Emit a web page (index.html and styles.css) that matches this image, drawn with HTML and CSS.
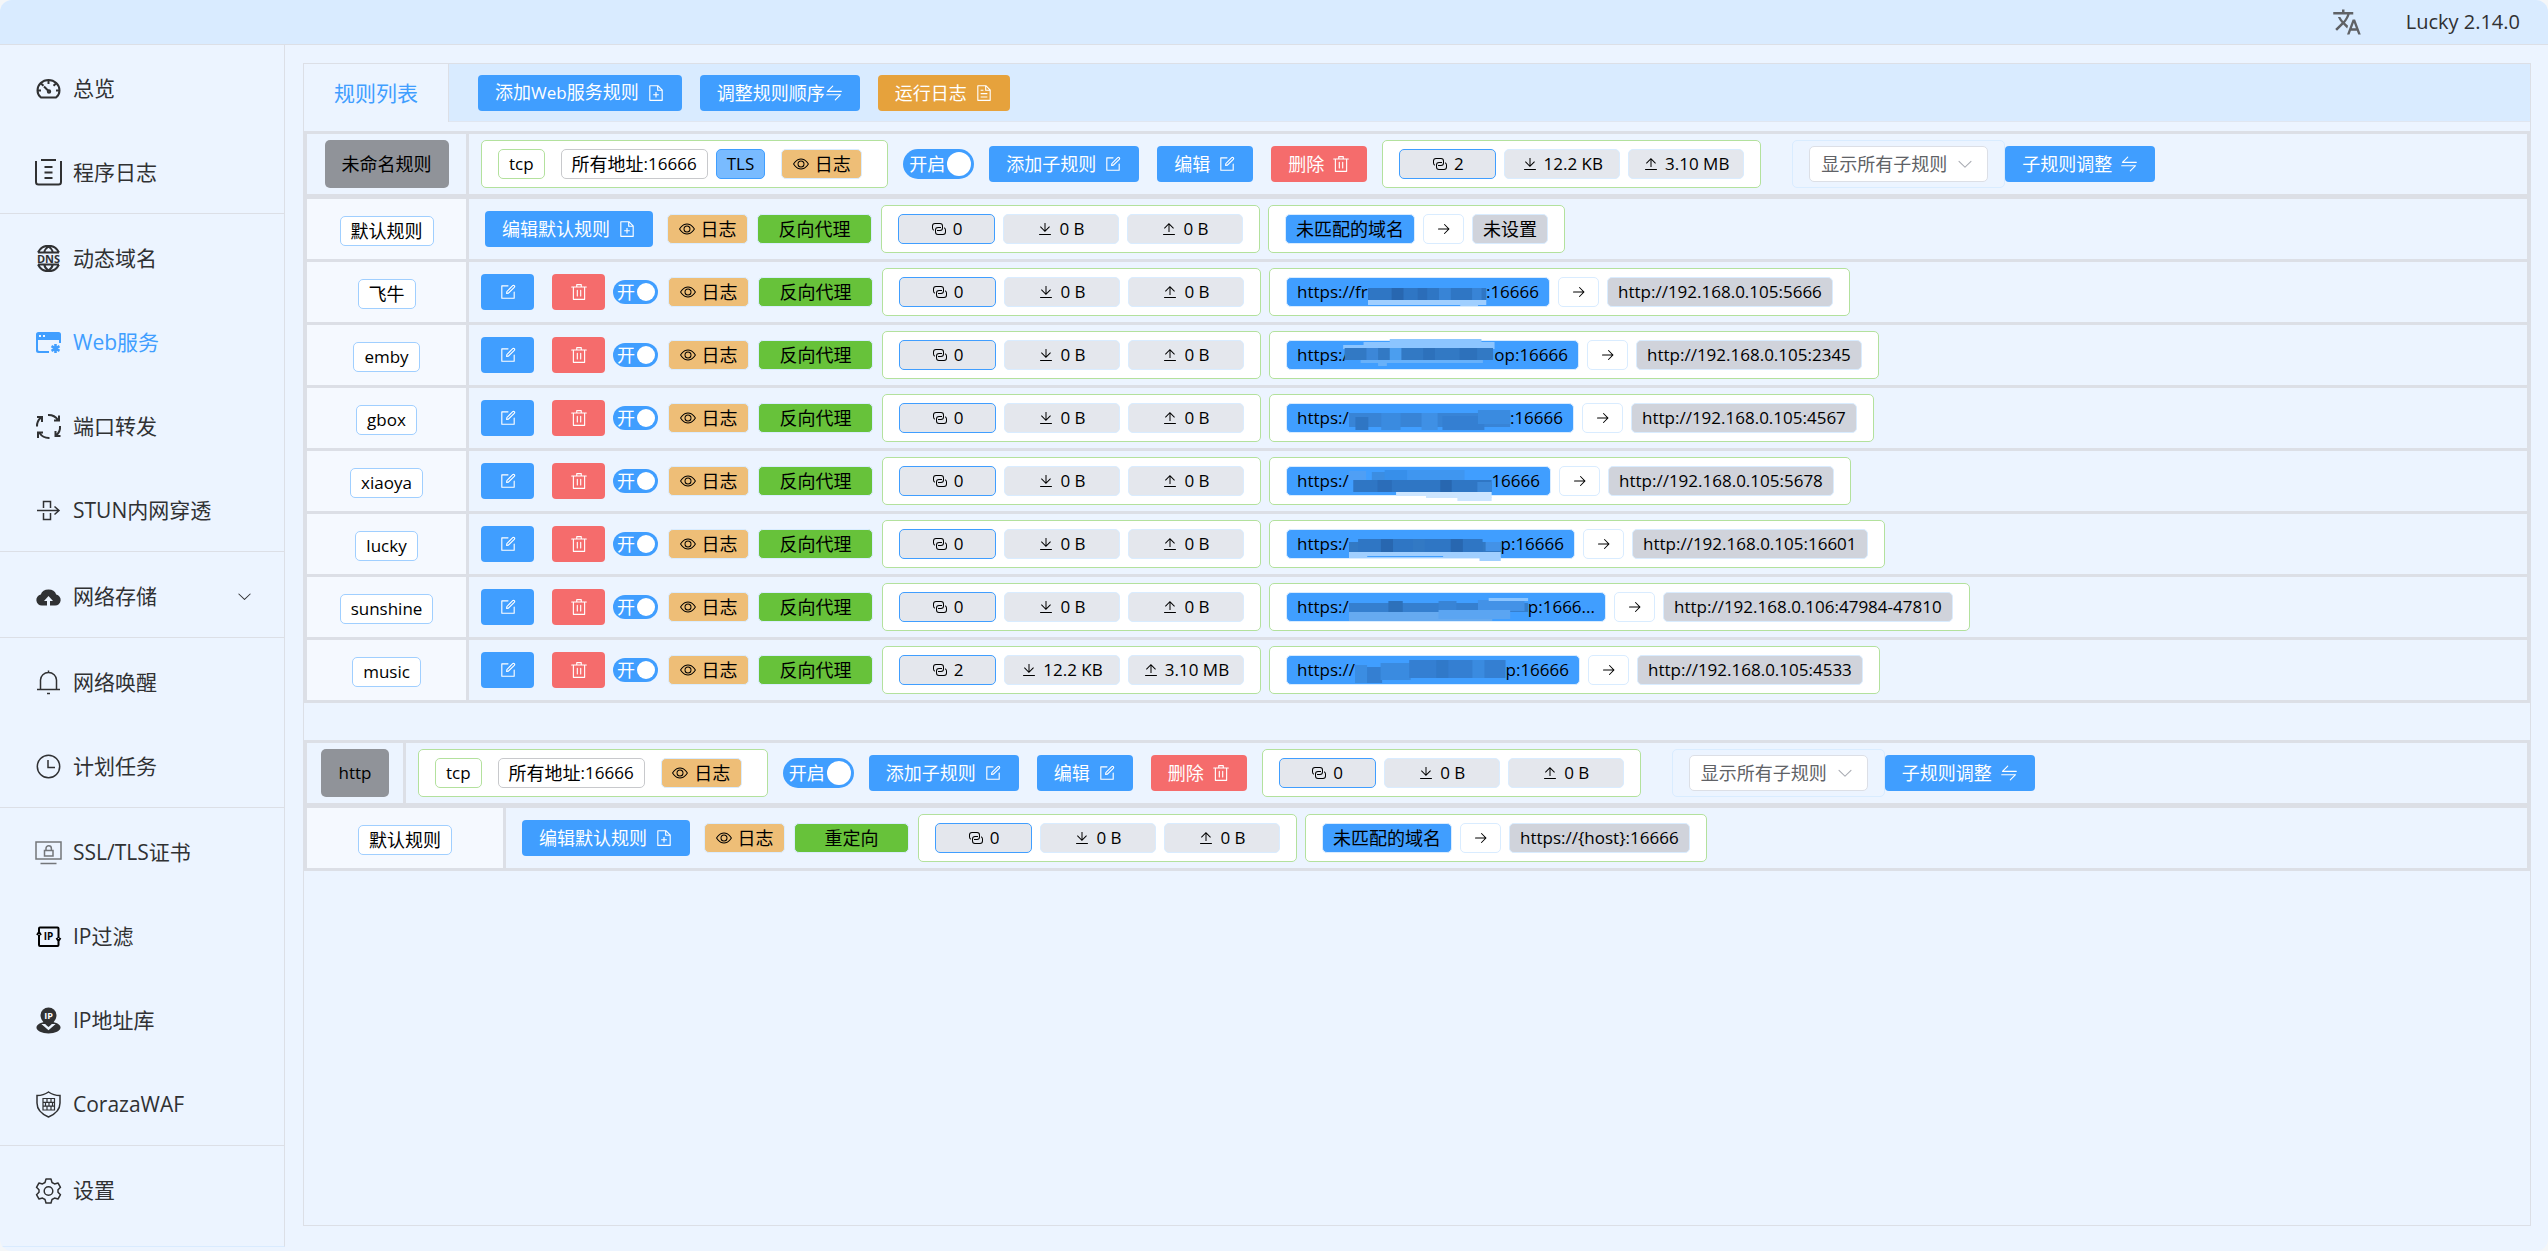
FILE: index.html
```html
<!DOCTYPE html>
<html lang="zh-CN">
<head>
    <meta charset="UTF-8">
    <title>Lucky</title>
    <link rel="stylesheet" href="styles.css">
</head>
<body>
    <svg class="sprite" aria-hidden="true">
        <symbol id="doc-add" viewBox="0 0 1024 1024"><path d="M832 384H576V128H192v768h640zm-26.496-64L640 154.496V320zM160 64h480l256 256v608a32 32 0 0 1-32 32H160a32 32 0 0 1-32-32V96a32 32 0 0 1 32-32m320 512V448h64v128h128v64H544v128h-64V640H352v-64z"/></symbol>
        <symbol id="doc" viewBox="0 0 1024 1024"><path d="M832 384H576V128H192v768h640zm-26.496-64L640 154.496V320zM160 64h480l256 256v608a32 32 0 0 1-32 32H160a32 32 0 0 1-32-32V96a32 32 0 0 1 32-32m160 448h384v64H320zm0-192h160v64H320zm0 384h384v64H320z"/></symbol>
        <symbol id="swap" viewBox="0 0 1024 1024"><path d="M118.656 438.656a32 32 0 0 1 0-45.248L416 96l4.48-3.776A32 32 0 0 1 461.248 96l3.712 4.48a32.064 32.064 0 0 1-3.712 40.832L218.56 384H928a32 32 0 1 1 0 64H141.248a32 32 0 0 1-22.592-9.344M64 608a32 32 0 0 1 32-32h786.752a32 32 0 0 1 22.656 54.592L608 928l-4.48 3.776a32.064 32.064 0 0 1-40.832-49.024L805.632 640H96a32 32 0 0 1-32-32"/></symbol>
        <symbol id="edit" viewBox="0 0 1024 1024"><path d="M832 512a32 32 0 1 1 64 0v352a32 32 0 0 1-32 32H160a32 32 0 0 1-32-32V160a32 32 0 0 1 32-32h352a32 32 0 0 1 0 64H192v640h640z"/><path d="m469.952 554.24 52.8-7.552L847.104 222.4a32 32 0 1 0-45.248-45.248L477.44 501.44l-7.552 52.8zm422.4-422.4a96 96 0 0 1 0 135.808l-331.84 331.84a32 32 0 0 1-18.112 9.088L436.8 623.68a32 32 0 0 1-36.224-36.224l15.104-105.6a32 32 0 0 1 9.024-18.112l331.904-331.84a96 96 0 0 1 135.744 0z"/></symbol>
        <symbol id="trash" viewBox="0 0 1024 1024"><path d="M160 256H96a32 32 0 0 1 0-64h256V95.936a32 32 0 0 1 32-32h256a32 32 0 0 1 32 32V192h256a32 32 0 1 1 0 64h-64v672a32 32 0 0 1-32 32H192a32 32 0 0 1-32-32zm448-64v-64H416v64zM224 896h576V256H224zm192-128a32 32 0 0 1-32-32V416a32 32 0 0 1 64 0v320a32 32 0 0 1-32 32m192 0a32 32 0 0 1-32-32V416a32 32 0 0 1 64 0v320a32 32 0 0 1-32 32"/></symbol>
        <symbol id="eye" viewBox="0 0 1024 1024"><path d="M512 160c320 0 512 352 512 352S832 864 512 864 0 512 0 512s192-352 512-352m0 64c-225.28 0-384.128 208.064-436.8 288 52.608 79.872 211.456 288 436.8 288 225.28 0 384.128-208.064 436.8-288-52.608-79.872-211.456-288-436.8-288m0 64a224 224 0 1 1 0 448 224 224 0 0 1 0-448m0 64a160.192 160.192 0 0 0-160 160c0 88.192 71.744 160 160 160s160-71.808 160-160-71.744-160-160-160"/></symbol>
        <symbol id="link" viewBox="0 0 1024 1024"><path d="M640 384v64H448a128 128 0 0 0-128 128v128a128 128 0 0 0 128 128h320a128 128 0 0 0 128-128V576a128 128 0 0 0-64-110.848V394.88c74.56 26.368 128 97.472 128 181.056v128a192 192 0 0 1-192 192H448a192 192 0 0 1-192-192V576a192 192 0 0 1 192-192z"/><path d="M384 640v-64h192a128 128 0 0 0 128-128V320a128 128 0 0 0-128-128H256a128 128 0 0 0-128 128v128a128 128 0 0 0 64 110.848v70.272A192.064 192.064 0 0 1 64 448V320a192 192 0 0 1 192-192h320a192 192 0 0 1 192 192v128a192 192 0 0 1-192 192z"/></symbol>
        <symbol id="down" viewBox="0 0 1024 1024"><path d="M160 832h704a32 32 0 1 1 0 64H160a32 32 0 1 1 0-64m384-253.696 236.288-236.352 45.248 45.248L508.8 704 192 387.2l45.248-45.248L480 584.704V128h64z"/></symbol>
        <symbol id="up" viewBox="0 0 1024 1024"><path d="M160 832h704a32 32 0 1 1 0 64H160a32 32 0 1 1 0-64m384-578.304V704h-64V247.296L237.248 490.048 192 444.8 508.8 128l316.8 316.8-45.312 45.248z"/></symbol>
        <symbol id="right" viewBox="0 0 1024 1024"><path d="M754.752 480H160a32 32 0 1 0 0 64h594.752L521.344 777.344a32 32 0 0 0 45.312 45.312l288-288a32 32 0 0 0 0-45.312l-288-288a32 32 0 1 0-45.312 45.312z"/></symbol>
        <symbol id="chevron" viewBox="0 0 1024 1024"><path d="M831.872 340.864 512 652.672 192.128 340.864a30.592 30.592 0 0 0-42.752 0 29.12 29.12 0 0 0 0 41.6L489.664 714.24a32 32 0 0 0 44.672 0l340.288-331.712a29.12 29.12 0 0 0 0-41.728 30.592 30.592 0 0 0-42.752 0z"/></symbol>
    </svg>

    <div class="app">
        <header class="topbar">
            <button class="lang" aria-label="语言"><svg viewBox="0 0 24 24"><path d="M12.87 15.07l-2.54-2.51.03-.03c1.74-1.94 2.98-4.17 3.71-6.53H17V4h-7V2H8v2H1v1.99h11.17C11.5 7.92 10.44 9.75 9 11.35 8.07 10.32 7.3 9.19 6.69 8h-2c.73 1.63 1.73 3.17 2.98 4.56l-5.09 5.02L4 19l5-5 3.11 3.11.76-2.04zM18.5 10h-2L12 22h2l1.12-3h4.75L21 22h2l-4.5-12zm-2.62 7l1.62-4.33L19.12 17h-3.24z"/></svg></button>
            <span class="version">Lucky 2.14.0</span>
        </header>

        <div class="body">
            <nav class="sidebar">
                <div class="menu-group">
                    <a href="#" class="menu-item">
                        <svg class="line" viewBox="0 0 27 27"><path d="M6 22.500C3.500 20.500 2.500 18 2.500 15.500a11 10.500 0 0 1 22 0c0 2.500-1 5-3.500 7z"/><path d="M13.500 5v4M6 8.500l2.500 2.300M21 8.500l-2.500 2.300M3 15.500h3M21 15.500h3M9 11.500l4.500 4.500"/><circle cx="14" cy="16.500" r="1.200"/></svg>
                        总览
                    </a>
                    <a href="#" class="menu-item">
                        <svg class="line" viewBox="0 0 27 27"><path d="M1 2v21q0 2.500 2.500 2.500h20q2.500 0 2.500-2.500V2M6 1h15M9.500 8h8M9.500 13.500h8M9.500 19h8"/></svg>
                        程序日志
                    </a>
                </div>
                <div class="menu-group">
                    <a href="#" class="menu-item">
                        <svg class="line" viewBox="0 0 27 27"><path d="M3 7.500C7.500-1.500 19.500-1.500 24 7.500M3 19.500C7.500 28.500 19.500 28.500 24 19.500M9 8q1-4.500 4.500-6.500Q17 3.500 18 8M9 19q1 4.500 4.500 6.500Q17 23.500 18 19M3 7.500h21M3 19.500h21"/><text x="13.500" y="17.500" class="dns">DNS</text></svg>
                        动态域名
                    </a>
                    <a href="#" class="menu-item active">
                        <svg viewBox="0 0 27 27"><path fill-rule="evenodd" d="M3.500 3h20A2.500 2.500 0 0 1 26 5.500V14h-2v-3H3v9.500q0 1.500 1.500 1.500H14v2H3.500A2.500 2.500 0 0 1 1 21.500v-16A2.500 2.500 0 0 1 3.500 3zM4 6v2h2V6zm4 0v2h2V6z"/><path d="M20.500 15v9M16.500 17.200l8 4.600M24.500 17.200l-8 4.600" stroke="currentColor" stroke-width="2.600"/></svg>
                        Web服务
                    </a>
                    <a href="#" class="menu-item">
                        <svg class="line" viewBox="0 0 27 27"><path d="M2 13.500A11 11 0 0 1 6 4.500M2 4h5v5M13 2a11.500 11.500 0 0 1 10 5M24 2.500v5h-5M25 13a11 11 0 0 1-4 9.500M25.500 23h-5v-5M14.500 25a11.500 11.500 0 0 1-10-5M3 25v-5.500h5"/></svg>
                        端口转发
                    </a>
                    <a href="#" class="menu-item">
                        <svg class="line thin" viewBox="0 0 27 27"><path d="M2 13.500h22M19.500 9.500l4.500 4-4.500 4M8.500 11V4.500h7V11M8.500 16v6.500h7V16"/></svg>
                        STUN内网穿透
                    </a>
                </div>
                <div class="menu-group">
                    <a href="#" class="menu-item">
                        <svg viewBox="0 0 27 27"><path fill-rule="evenodd" d="M7 22.500a5.500 5.500 0 0 1-1.200-10.900 8 7 0 0 1 15.400 0A5.500 5.500 0 0 1 20 22.500h-5V18h3l-4.500-5L9 18h3v4.500z"/></svg>
                        网络存储
                        <svg class="chev"><use href="#chevron"/></svg>
                    </a>
                </div>
                <div class="menu-group">
                    <a href="#" class="menu-item">
                        <svg class="line thin" viewBox="0 0 27 27"><path d="M2 20.500h23M5.500 20.500V11a8 7.500 0 0 1 16 0v9.500M13.500 1.500v2M12 24.500h3"/></svg>
                        网络唤醒
                    </a>
                    <a href="#" class="menu-item">
                        <svg class="line thin" viewBox="0 0 27 27"><circle cx="13.500" cy="13.500" r="11.200"/><path d="M13 7v7.500h7"/></svg>
                        计划任务
                    </a>
                </div>
                <div class="menu-group">
                    <a href="#" class="menu-item">
                        <svg class="line thin gray" viewBox="0 0 27 27"><path d="M1 3h25v17H1zM5.500 24.500h16M9.500 11.500h8.500v5.500H9.500zM11 11.500V9.500a2.700 2.700 0 0 1 5.400 0v2"/></svg>
                        SSL/TLS证书
                    </a>
                    <a href="#" class="menu-item">
                        <svg class="line black" viewBox="0 0 27 27"><path d="M4 9V5.500q0-1 1-1h17.500q1 0 1 1V15M23.500 18v4q0 1-1 1H5q-1 0-1-1V12M2 12l2-3 2 3M21.500 15l2 3 2-3"/><text x="13.500" y="17" class="ip">IP</text></svg>
                        IP过滤
                    </a>
                    <a href="#" class="menu-item">
                        <svg viewBox="0 0 27 27"><ellipse cx="13.500" cy="20.500" rx="12" ry="6"/><path d="M9 18h9l-4.500 4z" fill="#ecf4ff" stroke="#ecf4ff" stroke-width="2"/><path d="M13.500 20C8 15.500 5.500 12 5.500 8a8 7.500 0 0 1 16 0c0 4-2.500 7.500-8 12z"/><text x="13.500" y="12" class="pin">IP</text></svg>
                        IP地址库
                    </a>
                    <a href="#" class="menu-item">
                        <svg class="line thin" viewBox="0 0 27 27"><path d="M13.500 1q5 3.500 11.500 3.500V12c0 6.500-4.500 11-11.500 14C6.500 23 2 18.500 2 12V4.500Q8.500 4.500 13.500 1z"/><path stroke-width="1.200" d="M8 7.500h11.500v11.500H8zM8 11.300h11.500M8 15.200h11.500M12 7.500v3.800M16 7.500v3.800M14 11.300v3.900M10.500 11.300v3.900M17.500 11.300v3.900M12 15.200V19M16 15.200V19"/></svg>
                        CorazaWAF
                    </a>
                </div>
                <div class="menu-group">
                    <a href="#" class="menu-item">
                        <svg class="line thin" viewBox="0 0 27 27"><path stroke-linejoin="round" d="M11 2h5l1 3.500 2.500 1.400 3.500-.9 2.500 4.300-2.500 2.500v2.400l2.500 2.500-2.500 4.300-3.500-.9-2.500 1.400-1 3.500h-5l-1-3.500-2.500-1.400-3.500.9L1.500 17.700 4 15.200v-2.400l-2.500-2.500L4 6l3.500.9L10 5.500z"/><circle cx="13.500" cy="14" r="4.300"/></svg>
                        设置
                    </a>
                </div>
            </nav>

            <main class="content">
                <section class="panel">
                    <div class="panel-head">
                        <div class="tab">规则列表</div>
                        <div class="actions">
                            <button class="btn"><span>添加<span class="latin">Web</span>服务规则</span> <svg class="icon"><use href="#doc-add"/></svg></button>
                            <button class="btn tight">调整规则顺序<svg class="icon"><use href="#swap"/></svg></button>
                            <button class="btn warning">运行日志 <svg class="icon"><use href="#doc"/></svg></button>
                        </div>
                    </div>
                    <div id="rules"></div>
                </section>
            </main>
        </div>
    </div>
    <script src="script.js"></script>
</body>
</html>
```
FILE: styles.css
```css
* {
  box-sizing: border-box;
}

body {
  margin: 0;
  background: #f4f6f8;
  font-family: "Open Sans", "Noto Sans CJK SC", sans-serif;
  font-size: 18px;
  line-height: 24px;
  color: #000000;
}

button, select {
  font: inherit;
  margin: 0;
}

svg {
  fill: currentColor;
  flex: none;
}

.sprite {
  display: none;
}

.latin {
  font-size: 17px;
}

.app {
  display: flex;
  flex-direction: column;
  min-height: 100vh;
  background: #ecf4ff;
  border-radius: 12px;
  overflow: hidden;
}

/* top bar */
.topbar {
  display: flex;
  justify-content: flex-end;
  align-items: center;
  gap: 44px;
  height: 45px;
  padding-right: 28px;
  background: #d9ebff;
  border-bottom: 1px solid #dcdfe6;
}

.lang {
  display: flex;
  padding: 0;
  border: none;
  background: none;
  color: #606266;
  cursor: pointer;
}

.lang svg {
  width: 30px;
  height: 30px;
}

.version {
  font-size: 20px;
  color: #303133;
}

.body {
  display: flex;
  flex: 1;
}

/* sidebar */
.sidebar {
  width: 285px;
  flex: none;
  margin-bottom: 4px;
  border-right: 1px solid #dcdfe6;
  border-bottom: 1px solid #d9ebff;
}

.menu-group + .menu-group {
  padding-top: 1px;
  border-top: 1px solid #dcdfe6;
}

.menu-item {
  display: flex;
  align-items: center;
  gap: 11px;
  height: 84px;
  padding: 2px 31px 0 35px;
  font-size: 21px;
  color: #303133;
  text-decoration: none;
}

.menu-item.active {
  color: #409eff;
}

.menu-item svg {
  width: 27px;
  height: 27px;
}

.menu-item .chev {
  width: 17px;
  height: 17px;
  margin-left: auto;
}

.line {
  fill: none;
  stroke: currentColor;
  stroke-width: 2;
}

.thin {
  stroke-width: 1.500;
}

.gray {
  color: #73767a;
}

.black {
  color: #000000;
}

.line text, .pin {
  fill: currentColor;
  stroke: none;
  font-weight: bold;
  text-anchor: middle;
}

.dns {
  font-size: 11px;
}

.ip {
  font-size: 10px;
}

.pin {
  fill: #ffffff;
  font-size: 9px;
}

/* panel */
.content {
  flex: 1;
  display: flex;
  padding: 18px 17px 25px 18px;
}

.panel {
  flex: 1;
  border: 1px solid #dcdfe6;
}

.panel-head {
  display: flex;
  height: 58px;
  margin-bottom: 9px;
  background: #d9ebff;
  border-bottom: 1px solid #e0e6f0;
}

.tab {
  width: 145px;
  height: 58px;
  background: #ecf4ff;
  border-right: 1px solid #dcdfe6;
  font-size: 21px;
  line-height: 58px;
  text-align: center;
  color: #409eff;
}

.actions {
  display: flex;
  align-items: center;
  gap: 18px;
  padding-left: 29px;
}

.btn {
  display: inline-flex;
  align-items: center;
  justify-content: center;
  gap: 8px;
  height: 36px;
  padding: 0 17px;
  border: none;
  border-radius: 4px;
  background: #409eff;
  color: #ffffff;
  white-space: nowrap;
  cursor: pointer;
}

.btn.tight {
  gap: 0;
}

.btn.warning {
  background: #e6a23c;
}

.btn.danger {
  background: #f56c6c;
}

.btn.square {
  width: 53px;
  padding: 0;
}

.btn.name {
  min-width: 68px;
  height: 48px;
  border-radius: 5px;
  background: #909399;
  color: #000000;
}

.icon {
  width: 18px;
  height: 18px;
}

/* rule tables */
.rule {
  margin-bottom: 37px;
}

.grid {
  width: 100%;
  border: 3px solid #dcdfe6;
  border-collapse: separate;
  border-spacing: 0;
}

.grid.subs {
  margin-top: -1px;
}

.grid th, .grid td {
  height: 60px;
  padding: 0;
}

.grid th {
  border-right: 3px solid #dcdfe6;
  font-weight: normal;
}

.grid tr + tr th, .grid tr + tr td {
  height: 63px;
  border-top: 3px solid #dcdfe6;
}

.col-s {
  width: 99px;
}

.col-m {
  width: 162px;
}

.col-l {
  width: 199px;
}

.subs th {
  padding-top: 4px;
  background: #f5f9ff;
}

.line-items {
  display: flex;
  align-items: center;
  padding-left: 12px;
}

.head-buttons {
  display: flex;
  gap: 18px;
  margin: 0 15px;
}

.default-edit {
  margin: 0 14px 0 4px;
}

.row-buttons {
  display: flex;
  gap: 18px;
  margin-right: 8px;
}

.tag {
  display: inline-flex;
  align-items: center;
  justify-content: center;
  gap: 6px;
  height: 30px;
  padding: 0 10px;
  border: 1px solid #d9ecff;
  border-radius: 5px;
  background: #ffffff;
  white-space: nowrap;
}

.tag .icon {
  width: 16px;
  height: 16px;
}

.tag.label {
  border-color: #a0cfff;
}

.tag.net {
  margin-right: 8px;
  border-color: #b3e19d;
}

.tag.addr {
  gap: 0;
  border-color: #c8c9cc;
}

.tag.tls {
  border-color: #409eff;
  background: #79bbff;
}

.tag.log {
  width: 81px;
  background: #eebe77;
}

.tag.kind {
  width: 115px;
  margin: 0 9px;
  background: #67c23a;
}

.tag.conn {
  width: 97px;
  border-color: #409eff;
  background: #e4e7ed;
}

.tag.flow {
  width: 116px;
  background: #e4e7ed;
}

.tag.domain {
  gap: 0;
  background: #409eff;
}

.tag.arrow {
  width: 41px;
}

.tag.target {
  background: #d0d3db;
}

.box {
  display: flex;
  align-items: center;
  gap: 8px;
  height: 48px;
  padding: 0 16px;
  border: 1px solid #b3e19d;
  border-radius: 5px;
  background: #ffffff;
}

.box.listen {
  margin-right: 15px;
}

.listen .log {
  margin: 0 9px 0 8px;
}

.box.route {
  margin-left: 8px;
}

.box.filter {
  margin-left: 31px;
  border-color: #d9ecff;
  background: none;
}

.mosaic {
  height: 28px;
  flex: 1;
  overflow: visible;
}

.select {
  display: flex;
  align-items: center;
  position: relative;
  color: #a8abb2;
}

.select select {
  width: 179px;
  height: 36px;
  padding: 0 11px;
  border: 1px solid #dcdfe6;
  border-radius: 5px;
  background: #ffffff;
  color: #606266;
  appearance: none;
}

.select .icon {
  position: absolute;
  right: 14px;
  pointer-events: none;
}

.switch {
  display: flex;
  align-items: center;
  justify-content: space-between;
  width: 71px;
  height: 30px;
  padding: 0 3px 0 6px;
  border-radius: 15px;
  background: #409eff;
  color: #ffffff;
  cursor: pointer;
}

.switch input {
  appearance: none;
  order: 2;
  width: 24px;
  height: 24px;
  margin: 0;
  border-radius: 50%;
  background: #ffffff;
}

.switch.small {
  width: 45px;
  height: 24px;
  margin-right: 10px;
  padding: 0 3px 0 4px;
}

.switch.small input {
  width: 18px;
  height: 18px;
}
```
FILE: script.js
```js
const rules = [
    {
        name: '未命名规则', col: 'col-m', subCol: 'col-m', tls: true,
        stats: ['2', '12.2 KB', '3.10 MB'],
        fallback: { kind: '反向代理', target: '未设置' },
        subs: [
            { name: '飞牛', from: ['https://fr', ':16666'], width: 264, mask: 'm1', to: 'http://192.168.0.105:5666' },
            { name: 'emby', from: ['https:/', 'op:16666'], width: 293, mask: 'm2', to: 'http://192.168.0.105:2345' },
            { name: 'gbox', from: ['https:/', ':16666'], width: 288, mask: 'm3', to: 'http://192.168.0.105:4567' },
            { name: 'xiaoya', from: ['https:/', '16666'], width: 265, mask: 'm4', to: 'http://192.168.0.105:5678' },
            { name: 'lucky', from: ['https:/', 'p:16666'], width: 289, mask: 'm5', to: 'http://192.168.0.105:16601' },
            { name: 'sunshine', from: ['https:/', 'p:1666...'], width: 320, mask: 'm6', to: 'http://192.168.0.106:47984-47810' },
            { name: 'music', from: ['https://', 'p:16666'], width: 294, mask: 'm7', to: 'http://192.168.0.105:4533', stats: ['2', '12.2 KB', '3.10 MB'] }
        ]
    },
    {
        name: 'http', col: 'col-s', subCol: 'col-l', tls: false,
        stats: ['0', '0 B', '0 B'],
        fallback: { kind: '重定向', target: 'https://{host}:16666' },
        subs: []
    }
];

// mosaic blocks over the private part of each domain: [x, y, w, h, color], x and w in percent
const masks = {
    m1: [[0, 10, 100, 12, '#2f76c4'], [20, 10, 10, 12, '#2867b0'], [42, 10, 8, 12, '#2b6db9'], [60, 10, 10, 12, '#3884d6'], [88, 10, 8, 12, '#3884d6'], [0, 22, 100, 5, '#a0cfff'], [78, 26, 15, 2, '#a0cfff']],
    m2: [[-4, 4, 20, 4, '#8cc5ff'], [10, 1, 90, 7, '#8cc5ff'], [28, -2, 63, 5, '#8cc5ff'], [-3, 7, 102, 12, '#3279c4'], [12, 7, 8, 12, '#3c87d8'], [28, 7, 8, 12, '#4b9eef'], [51, 7, 8, 12, '#2d71bb'], [76, 7, 12, 12, '#2d71bb'], [8, 19, 84, 3, '#68b1fa'], [20, 21, 6, 4, '#68b1fa']],
    m3: [[0, 9, 100, 14, '#3884d6'], [4, 13, 8, 13, '#2f76c4'], [20, 9, 12, 17, '#3a8be0'], [45, 9, 10, 17, '#3f90e5'], [58, 12, 26, 14, '#347fd2'], [80, 6, 20, 14, '#3a8be0']],
    m4: [[0, 4, 12, 9, '#4f9ff5'], [16, 5, 10, 8, '#3b8de2'], [25, 3, 16, 10, '#378fea'], [41, 3, 40, 10, '#3f96f0'], [3, 13, 97, 12, '#2f76c4'], [20, 13, 10, 12, '#2b6db9'], [64, 13, 8, 12, '#2867b0'], [90, 15, 10, 10, '#3b87d7'], [33, 25, 67, 4, '#cce5ff'], [54, 28, 46, 3, '#cce5ff'], [76, 30, 24, 4, '#cce5ff']],
    m5: [[0, 12, 100, 10, '#3279c4'], [6, 9, 82, 13, '#2f76c4'], [21, 9, 8, 13, '#2867b0'], [42, 9, 8, 13, '#3279c4'], [67, 9, 8, 13, '#2867b0'], [90, 12, 10, 9, '#4392e7'], [0, 22, 100, 6, '#a0cfff'], [12, 26, 50, 1, '#409eff'], [86, 27, 14, 4, '#a0cfff']],
    m6: [[0, 10, 100, 9, '#357fcf'], [22, 8, 8, 11, '#2d71bb'], [50, 8, 10, 11, '#3884d6'], [72, 7, 26, 11, '#4392e7'], [0, 19, 80, 9, '#66aaf0'], [50, 17, 40, 9, '#5ba5f2'], [78, 5, 22, 3, '#8cc5ff']],
    m7: [[0, 9, 8, 18, '#3b8de2'], [8, 11, 10, 16, '#347fd2'], [17, 7, 20, 17, '#3a8be0'], [36, 4, 64, 18, '#347fd2'], [54, 4, 8, 18, '#3079c9'], [78, 4, 8, 18, '#3a8be0']]
};

const icon = name => `<svg class="icon"><use href="#${name}"/></svg>`;
const log = `<span class="tag log">${icon('eye')}日志</span>`;
// latin strings use the smaller size, chinese ones the base size
const text = s => /^[\x20-\x7e]+$/.test(s) ? `<span class="latin">${s}</span>` : s;

function statBox(s) {
    return `<div class="box">
        <span class="tag conn">${icon('link')}${text(s[0])}</span>
        <span class="tag flow">${icon('down')}${text(s[1])}</span>
        <span class="tag flow">${icon('up')}${text(s[2])}</span>
    </div>`;
}

function mosaic(id) {
    const rects = masks[id].map(([x, y, w, h, c]) =>
        `<rect x="${x}%" y="${y}" width="${w}%" height="${h}" fill="${c}"/>`).join('');
    return `<svg class="mosaic" width="10" aria-hidden="true">${rects}</svg>`;
}

function routeBox(domain, target) {
    return `<div class="box route">${domain}
        <span class="tag arrow">${icon('right')}</span>
        <span class="tag target">${text(target)}</span>
    </div>`;
}

function headRow(r) {
    return `<table class="grid"><tr>
        <th class="${r.col}"><button class="btn name">${text(r.name)}</button></th>
        <td><div class="line-items">
            <div class="box listen">
                <span class="tag net">${text('tcp')}</span>
                <span class="tag addr">所有地址<span class="latin">:16666</span></span>
                ${r.tls ? `<span class="tag tls">${text('TLS')}</span>` : ''}
                ${log}
            </div>
            <label class="switch"><input type="checkbox" checked>开启</label>
            <div class="head-buttons">
                <button class="btn">添加子规则 ${icon('edit')}</button>
                <button class="btn">编辑 ${icon('edit')}</button>
                <button class="btn danger">删除 ${icon('trash')}</button>
            </div>
            ${statBox(r.stats)}
            <div class="box filter">
                <div class="select">
                    <select aria-label="子规则显示"><option>显示所有子规则</option></select>
                    ${icon('chevron')}
                </div>
            </div>
            <button class="btn">子规则调整 ${icon('swap')}</button>
        </div></td>
    </tr></table>`;
}

function defaultRow(r) {
    return `<tr>
        <th class="${r.subCol}"><span class="tag label">默认规则</span></th>
        <td><div class="line-items">
            <button class="btn default-edit">编辑默认规则 ${icon('doc-add')}</button>
            ${log}
            <span class="tag kind">${r.fallback.kind}</span>
            ${statBox(['0', '0 B', '0 B'])}
            ${routeBox('<span class="tag domain">未匹配的域名</span>', r.fallback.target)}
        </div></td>
    </tr>`;
}

function subRow(s) {
    const domain = `<span class="tag domain" style="width: ${s.width}px">${text(s.from[0])}${mosaic(s.mask)}${text(s.from[1])}</span>`;
    return `<tr>
        <th><span class="tag label">${text(s.name)}</span></th>
        <td><div class="line-items">
            <div class="row-buttons">
                <button class="btn square" aria-label="编辑">${icon('edit')}</button>
                <button class="btn square danger" aria-label="删除">${icon('trash')}</button>
            </div>
            <label class="switch small"><input type="checkbox" checked>开</label>
            ${log}
            <span class="tag kind">反向代理</span>
            ${statBox(s.stats || ['0', '0 B', '0 B'])}
            ${routeBox(domain, s.to)}
        </div></td>
    </tr>`;
}

document.getElementById('rules').innerHTML = rules.map(r => `
    <div class="rule">
        ${headRow(r)}
        <table class="grid subs">${defaultRow(r)}${r.subs.map(subRow).join('')}</table>
    </div>`).join('');
```
